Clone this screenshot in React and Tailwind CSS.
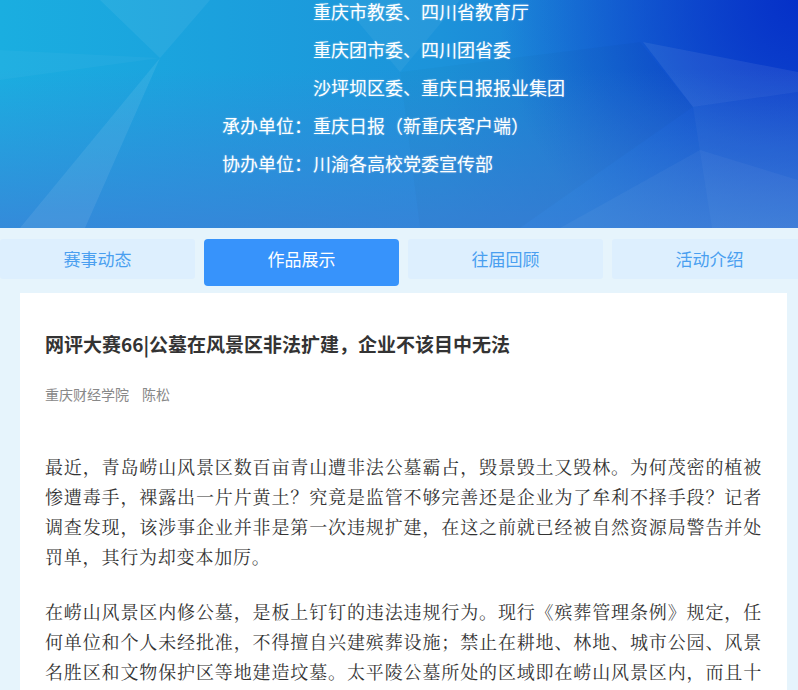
import React from 'react';

const sponsors = [
  { label: '', text: '重庆市教委、四川省教育厅' },
  { label: '', text: '重庆团市委、四川团省委' },
  { label: '', text: '沙坪坝区委、重庆日报报业集团' },
  { label: '承办单位：', text: '重庆日报（新重庆客户端）' },
  { label: '协办单位：', text: '川渝各高校党委宣传部' },
];

const tabs = ['赛事动态', '作品展示', '往届回顾', '活动介绍'];

const Banner = () => (
  <div className="relative h-[228px] overflow-hidden">
    <svg className="absolute inset-0" width="798" height="228" viewBox="0 0 798 228" preserveAspectRatio="none">
      <defs>
        <linearGradient id="base" x1="0" y1="0" x2="1" y2="0">
          <stop offset="0" stopColor="#1aaee0" />
          <stop offset="0.55" stopColor="#1c93da" />
          <stop offset="1" stopColor="#1a62d2" />
        </linearGradient>
        <radialGradient id="corner" cx="798" cy="0" r="300" gradientUnits="userSpaceOnUse">
          <stop offset="0" stopColor="#0530c8" stopOpacity="1" />
          <stop offset="1" stopColor="#0530c8" stopOpacity="0" />
        </radialGradient>
        <linearGradient id="bottom" x1="0" y1="0" x2="0" y2="1">
          <stop offset="0.3" stopColor="#3d7fd8" stopOpacity="0" />
          <stop offset="1" stopColor="#3d7fd8" stopOpacity="0.75" />
        </linearGradient>
      </defs>
      <rect width="798" height="228" fill="url(#base)" />
      <rect width="798" height="228" fill="url(#corner)" />
      <rect width="798" height="228" fill="url(#bottom)" />
      <polygon points="100,0 210,0 160,58" fill="#ffffff" fillOpacity="0.06" />
      <polygon points="0,50 160,58 0,80" fill="#ffffff" fillOpacity="0.03" />
      <polygon points="160,58 20,228 85,228" fill="#ffffff" fillOpacity="0.08" />
      <polygon points="340,0 460,0 400,72" fill="#ffffff" fillOpacity="0.05" />
      <polygon points="643,42 798,72 798,92 693,107" fill="#ffffff" fillOpacity="0.07" />
      <polygon points="693,107 798,92 798,228 712,228" fill="#ffffff" fillOpacity="0.03" />
      <polygon points="400,72 640,42 693,107 520,228 420,228" fill="#000000" fillOpacity="0.02" />
      <polygon points="560,228 700,150 798,180 798,228" fill="#ffffff" fillOpacity="0.04" />
    </svg>
    <div className="relative -mt-2 pl-[222px] flex flex-col text-white text-[18px] leading-[38px] [text-shadow:0_0_2px_rgba(255,255,255,0.4)]" style={{ fontFamily: '"Noto Sans CJK SC", "Noto Sans", sans-serif' }}>
      {sponsors.map((s, i) => (
        <div key={i} className="flex">
          <span className="w-[91px]">{s.label}</span>
          <span>{s.text}</span>
        </div>
      ))}
    </div>
  </div>
);

const Tabs = () => (
  <div className="flex gap-[9px] items-start mt-[11px] overflow-hidden">
    {tabs.map((t, i) =>
      i === 1 ? (
        <div key={t} className="shrink-0 w-[195px] h-[47px] rounded-[4px] bg-[#3793fb] text-white text-center text-[17px] leading-[40px]">
          {t}
        </div>
      ) : (
        <div key={t} className="shrink-0 w-[195px] h-[40px] rounded-[3px] bg-[#ddeffe] text-[#4a9ff0] text-center text-[17px] leading-[40px]">
          {t}
        </div>
      )
    )}
  </div>
);

const Article = () => (
  <div className="mx-[20px] mr-[11px] mt-[7px] bg-white px-[25px] pt-[37px] pb-10">
    <h1 className="text-[19px] leading-[28px] font-bold text-[#333333]">
      网评大赛66|公墓在风景区非法扩建，企业不该目中无法
    </h1>
    <div className="mt-[26px] text-[14px] leading-[20px] text-[#888888] flex gap-[13px]">
      <span>重庆财经学院</span>
      <span>陈松</span>
    </div>
    <div
      className="mt-[47px] w-[717px] text-[18px] leading-[30px] tracking-[0.8px] text-[#333333] text-justify"
      style={{ fontFamily: '"Noto Serif CJK SC", "Noto Sans CJK SC", serif' }}
    >
      <p>
        最近，青岛崂山风景区数百亩青山遭非法公墓霸占，毁景毁土又毁林。为何茂密的植被惨遭毒手，裸露出一片片黄土？究竟是监管不够完善还是企业为了牟利不择手段？记者调查发现，该涉事企业并非是第一次违规扩建，在这之前就已经被自然资源局警告并处罚单，其行为却变本加厉。
      </p>
      <p className="mt-[25px]">
        在崂山风景区内修公墓，是板上钉钉的违法违规行为。现行《殡葬管理条例》规定，任何单位和个人未经批准，不得擅自兴建殡葬设施；禁止在耕地、林地、城市公园、风景名胜区和文物保护区等地建造坟墓。太平陵公墓所处的区域即在崂山风景区内，而且十分明显，监管部门理应及早发现并加以制止。
      </p>
    </div>
  </div>
);

export default function App() {
  return (
    <div className="w-[798px] h-[690px] overflow-hidden bg-[#e6f4fc]" style={{ fontFamily: '"Noto Sans CJK SC", "Noto Sans", sans-serif' }}>
      <Banner />
      <Tabs />
      <Article />
    </div>
  );
}
